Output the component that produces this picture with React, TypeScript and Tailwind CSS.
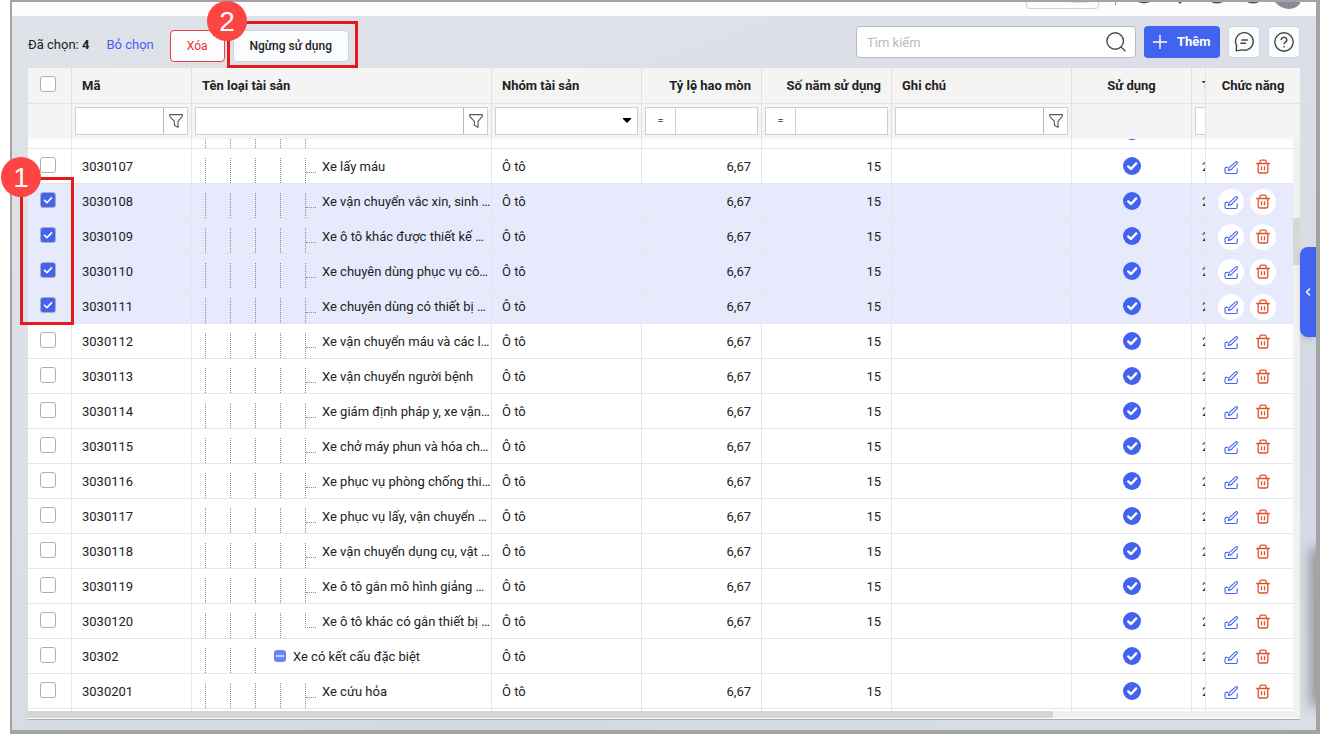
import { ChevronLeft } from "lucide-react"

type Row = { code: string; name: string; checked?: boolean; last?: boolean; group?: boolean }

// rows without a code are the ones scrolled out at the top and bottom edge
const rows: Row[] = [
  { code: "", name: "" },
  { code: "3030107", name: "Xe lấy máu" },
  { code: "3030108", name: "Xe vận chuyển vắc xin, sinh …", checked: true },
  { code: "3030109", name: "Xe ô tô khác được thiết kế …", checked: true },
  { code: "3030110", name: "Xe chuyên dùng phục vụ cô…", checked: true },
  { code: "3030111", name: "Xe chuyên dùng có thiết bị …", checked: true },
  { code: "3030112", name: "Xe vận chuyển máu và các l…" },
  { code: "3030113", name: "Xe vận chuyển người bệnh" },
  { code: "3030114", name: "Xe giám định pháp y, xe vận…" },
  { code: "3030115", name: "Xe chở máy phun và hóa ch…" },
  { code: "3030116", name: "Xe phục vụ phòng chống thi…" },
  { code: "3030117", name: "Xe phục vụ lấy, vận chuyển …" },
  { code: "3030118", name: "Xe vận chuyển dụng cụ, vật …" },
  { code: "3030119", name: "Xe ô tô gắn mô hình giảng …" },
  { code: "3030120", name: "Xe ô tô khác có gắn thiết bị …", last: true },
  { code: "30302", name: "Xe có kết cấu đặc biệt", group: true },
  { code: "3030201", name: "Xe cứu hỏa" },
  { code: "", name: "" },
]

function Checkbox({ label, checked }: { label: string; checked?: boolean }) {
  return (
    <span className="relative mb-[2px] ml-3 block h-4 w-4">
      <input
        type="checkbox"
        aria-label={label}
        defaultChecked={checked}
        className="peer block h-4 w-4 appearance-none rounded-[3px] border border-[#afafaf] bg-white checked:bg-[#4262f0]"
      />
      <svg
        viewBox="0 0 16 16"
        className="pointer-events-none absolute inset-0 hidden h-4 w-4 peer-checked:block"
        fill="none"
        stroke="white"
        strokeWidth="1.6"
      >
        <path d="M4 7.8 7 10.6 12 5.4" />
      </svg>
    </span>
  )
}

function FunnelIcon() {
  return (
    <svg viewBox="0 0 16 16" className="h-4 w-4" fill="none" stroke="#555" strokeWidth="1.1" strokeLinejoin="round">
      <path d="M1.7 1.6h12.6v1.8L10 8.4v6L6.4 12.2V8.4L1.7 3.4z" />
    </svg>
  )
}

function TextFilter({ label }: { label: string }) {
  return (
    <div className="mx-[3px] mt-[3px] flex h-7 border border-[#d0d0d0] bg-white">
      <input aria-label={label} className="w-0 min-w-0 flex-1 px-2 outline-none" />
      <button aria-label={`Lọc ${label}`} className="flex w-6 items-center justify-center border-l border-[#b8b8b8]">
        <FunnelIcon />
      </button>
    </div>
  )
}

function NumberFilter({ label }: { label: string }) {
  return (
    <div className="mx-[3px] mt-[3px] flex h-7 border border-[#d0d0d0] bg-white">
      <button aria-label={`Phép so sánh ${label}`} className="w-[30px] border-r border-[#d0d0d0] text-[11px] text-[#555]">
        =
      </button>
      <input aria-label={label} className="w-0 min-w-0 flex-1 px-2 outline-none" />
    </div>
  )
}

function CheckIcon() {
  return (
    <svg viewBox="0 0 18 18" className="mx-auto block h-[18px] w-[18px]" role="img" aria-label="Đang sử dụng">
      <circle cx="9" cy="9" r="9" fill="#4262f0" />
      <path d="M5.2 9.4 8 12l5.2-5.6" fill="none" stroke="white" strokeWidth="2.4" strokeLinecap="round" strokeLinejoin="round" />
    </svg>
  )
}

function EditIcon() {
  return (
    <svg viewBox="0 0 16 16" className="h-4 w-4" fill="none" stroke="#4262f0" strokeWidth="1.1" strokeLinejoin="round" strokeLinecap="round">
      <path d="M12.7 2.8a1.1 1.1 0 0 1 1.6 1.5L8.2 10.6l-2.9.9.9-2.8z" />
      <path d="M4.6 8.4H3.4c-.9 0-1.4.5-1.4 1.3v3.4c0 .8.5 1.4 1.4 1.4h9.4c.9 0 1.4-.6 1.4-1.4V9.8" />
    </svg>
  )
}

function TrashIcon() {
  return (
    <svg viewBox="0 0 16 16" className="h-4 w-4" fill="none" stroke="#e0522b" strokeWidth="1.3" strokeLinejoin="round">
      <path d="M1.2 4.5h13.6M4.8 4.5V3c0-1.2.6-1.8 1.6-1.8h3.2c1 0 1.6.6 1.6 1.8v1.5" />
      <path d="M3.2 4.5v7.6c0 1.2.6 1.9 1.8 1.9h6c1.2 0 1.8-.7 1.8-1.9V4.5M6.5 7.2v4M9.5 7.2v4" />
    </svg>
  )
}

function TreeCell({ row }: { row: Row }) {
  const guide = "h-[25px] w-[25px] shrink-0 self-end border-l border-dotted border-[#8c8c8c]"
  if (row.group) {
    return (
      <div className="ml-[13px] flex h-[34px] items-center">
        <span className={guide} />
        <span className={guide} />
        <span className="h-[25px] w-[19px] shrink-0 self-end border-l border-dotted border-[#8c8c8c]" />
        <button aria-label="Thu gọn" className="mr-[7px] flex h-3 w-3 items-center justify-center rounded-[3px] bg-[#6b84fa]">
          <span className="h-[2px] w-2 bg-[#cdd5fd]" />
        </button>
        <span className="whitespace-nowrap pt-[2px]">{row.name}</span>
      </div>
    )
  }
  return (
    <div className="ml-[13px] flex h-[34px] items-center">
      <span className={guide} />
      <span className={guide} />
      <span className={guide} />
      <span className={guide} />
      <span className={`flex h-[25px] w-[11px] shrink-0 self-end ${row.last ? "" : "border-l border-dotted border-[#8c8c8c]"}`}>
        {row.code && <span className={`h-[15px] w-full border-b border-dotted border-[#8c8c8c] ${row.last ? "border-l" : ""}`} />}
      </span>
      <span className="ml-[6px] whitespace-nowrap pt-[2px]">{row.name}</span>
    </div>
  )
}

function TableRow({ row }: { row: Row }) {
  const action = `flex h-[26px] w-[26px] items-center justify-center rounded-full ${row.checked ? "bg-white" : ""}`
  const filled = row.code !== "" && !row.group
  return (
    <tr className={`h-[35px] ${row.checked ? "bg-[#e7eafd]" : "bg-white"} [&>td]:border-b [&>td]:border-r [&>td]:border-[#e6e6e6] [&>td]:p-0`}>
      <td>
        <Checkbox label={`Chọn ${row.code}`} checked={row.checked} />
      </td>
      <td>
        <div className="pl-[10px] pt-[2px]">{row.code}</div>
      </td>
      <td>
        <TreeCell row={row} />
      </td>
      <td>
        <div className="pl-[10px] pt-[2px]">{row.code && "Ô tô"}</div>
      </td>
      <td>
        <div className="pr-[10px] pt-[2px] text-right">{filled && "6,67"}</div>
      </td>
      <td>
        <div className="pr-[10px] pt-[2px] text-right">{filled && "15"}</div>
      </td>
      <td />
      <td>
        <CheckIcon />
      </td>
      <td>
        <div className="overflow-hidden pl-[10px] pt-[2px]">{row.code && "2"}</div>
      </td>
      <td className="border-r-0!">
        {row.code && (
          <div className="flex items-center gap-[6px] pl-3 pt-[2px]">
            <button aria-label={`Sửa ${row.code}`} className={action}>
              <EditIcon />
            </button>
            <button aria-label={`Xóa ${row.code}`} className={action}>
              <TrashIcon />
            </button>
          </div>
        )}
      </td>
    </tr>
  )
}

function TopBar() {
  return (
    <header className="flex h-[14px] shrink-0 items-start justify-end overflow-hidden bg-[#fdfdfe] pr-4">
      <div className="flex h-[7px] w-[73px] justify-center rounded-b border border-t-0 border-[#cfd3dd] pl-8">
        <span className="h-px w-4 bg-[#ddd]" />
      </div>
      <span className="ml-4 h-[3px] w-px bg-[#999]" />
      <svg viewBox="0 0 184 8" className="h-2 w-[184px]">
        <path d="M22 0h12l-3 1h-2l-1 1-1-1h-2zM62 0h4l-2 2zM95 0h12q-6 3-12 0zM131 0h12q-6 3-12 0z" fill="#555" />
        <path d="M159 0h26q-4 7-12 7t-14-7z" fill="#868b96" />
      </svg>
    </header>
  )
}

function Toolbar() {
  return (
    <div className="flex h-[52px] shrink-0 items-center px-4">
      <div className="flex items-center pt-2">
        <span className="pb-[2px]">
          Đã chọn: <b className="font-bold">4</b>
        </span>
        <button className="ml-[17px] pb-[2px] text-[#4262f0]">Bỏ chọn</button>
        <button className="ml-4 h-8 w-[55px] rounded border border-[#e8413f] bg-[#fafcfe] text-xs text-[#e8302e]">Xóa</button>
        <button className="ml-2 h-8 w-[116px] rounded border border-[#cfd3dc] bg-[#fafcfe] text-xs font-medium">
          Ngừng sử dụng
        </button>
      </div>
      <div className="ml-auto flex h-8 w-[280px] items-center rounded border border-[#b9bcc3] bg-white pr-[9px]">
        <input
          aria-label="Tìm kiếm"
          placeholder="Tìm kiếm"
          className="min-w-0 flex-1 px-[10px] pt-[2px] outline-none placeholder:text-[#b9b9b9]"
        />
        <svg viewBox="0 0 20 20" className="h-5 w-5" fill="none" stroke="#4a4a4a" strokeWidth="1.4">
          <circle cx="9.2" cy="9" r="8.3" />
          <path d="m15 15 4.4 4.2" />
        </svg>
      </div>
      <button className="ml-2 flex h-8 w-[76px] items-center rounded bg-[#4262f0] pl-[9px] font-bold text-white">
        <svg viewBox="0 0 14 14" className="mr-[10px] h-[14px] w-[14px]" stroke="white" strokeWidth="1.4">
          <path d="M7 0v14M0 7h14" />
        </svg>
        Thêm
      </button>
      <button aria-label="Phản hồi" className="ml-2 flex h-8 w-8 items-center justify-center rounded border border-[#cfd3dc] bg-[#fafcfe]">
        <svg viewBox="0 0 20 20" className="h-5 w-5" fill="none" stroke="#444" strokeWidth="1.4" strokeLinejoin="round">
          <path d="M2.2 18.9 2.6 13.6A8.8 8.8 0 1 1 7.8 17.9zM7.4 8h6.4M6.4 11.2h5.6" />
        </svg>
      </button>
      <button aria-label="Trợ giúp" className="ml-2 flex h-8 w-8 items-center justify-center rounded border border-[#cfd3dc] bg-[#fafcfe]">
        <svg viewBox="0 0 20 20" className="h-5 w-5" fill="none" stroke="#444" strokeWidth="1.4">
          <circle cx="10" cy="10" r="9.2" />
          <path d="M7.2 8a2.8 2.6 0 1 1 4.2 2.2c-1 .6-1.4 1-1.4 2M10 14v1.6" />
        </svg>
      </button>
    </div>
  )
}

function Columns() {
  return (
    <>
      <col className="w-[44px]" />
      <col className="w-[120px]" />
      <col className="w-[300px]" />
      <col className="w-[150px]" />
      <col className="w-[120px]" />
      <col className="w-[130px]" />
      <col />
      <col className="w-[120px]" />
      <col className="w-[14px]" />
    </>
  )
}

function HeaderTable() {
  return (
    <table className="w-full table-fixed border-separate border-spacing-0 bg-[#f4f4f4]">
      <colgroup>
        <Columns />
        <col className="w-[94px]" />
      </colgroup>
      <thead className="[&_th]:border-r [&_th]:border-[#e2e2e2] [&_th]:px-[10px] [&_th]:py-0 [&_td]:border-r [&_td]:border-[#e2e2e2] [&_td]:p-0">
        <tr className="h-9 text-left [&>th]:border-b [&>th]:font-bold">
          <th className="px-0! pb-[2px]!">
            <Checkbox label="Chọn tất cả" />
          </th>
          <th>Mã</th>
          <th>Tên loại tài sản</th>
          <th>Nhóm tài sản</th>
          <th className="text-right">Tỷ lệ hao mòn</th>
          <th className="text-right">Số năm sử dụng</th>
          <th>Ghi chú</th>
          <th className="text-center">Sử dụng</th>
          <th className="px-0!">
            <div className="overflow-hidden pl-[10px]">T</div>
          </th>
          <th className="border-r-0! px-0! text-center">Chức năng</th>
        </tr>
        <tr className="h-[35px] align-top">
          <td />
          <td>
            <TextFilter label="Mã" />
          </td>
          <td>
            <TextFilter label="Tên loại tài sản" />
          </td>
          <td>
            <div className="relative mx-[3px] mt-[3px]">
              <select aria-label="Nhóm tài sản" className="block h-7 w-full appearance-none border border-[#d0d0d0] bg-white px-2">
                <option />
                <option>Ô tô</option>
              </select>
              <svg viewBox="0 0 8 5" className="pointer-events-none absolute right-[7px] top-[11px] h-[5px] w-2">
                <path d="M0 0h8v1L4 5 0 1z" />
              </svg>
            </div>
          </td>
          <td>
            <NumberFilter label="Tỷ lệ hao mòn" />
          </td>
          <td>
            <NumberFilter label="Số năm sử dụng" />
          </td>
          <td>
            <TextFilter label="Ghi chú" />
          </td>
          <td />
          <td>
            <div className="ml-[3px] mt-[3px] h-7 border border-r-0 border-[#d0d0d0] bg-white" />
          </td>
          <td className="border-r-0!" />
        </tr>
      </thead>
    </table>
  )
}

export default function App() {
  return (
    <div className="relative h-screen overflow-hidden bg-white pl-[10px] font-[Roboto,sans-serif] text-[13px] leading-4 text-[#222]">
      <div className="relative flex h-full flex-col overflow-hidden border-2 border-b-4 border-r-4 border-[#a3a3a3] bg-[linear-gradient(160deg,#dfe2e8_0%,#dcdfe8_40%,#d2d9e2_75%,#dadee7_100%)]">
        <TopBar />
        <Toolbar />
        <main className="mx-4 mb-[10px] flex min-h-0 flex-1 flex-col border-b border-[#a9adb3] bg-white">
          <HeaderTable />
          <div className="flex min-h-0 flex-1 overflow-hidden">
            <div className="min-w-0 flex-1 overflow-hidden">
              <table className="-mt-[25px] w-full table-fixed border-separate border-spacing-0">
                <colgroup>
                  <Columns />
                  <col className="w-[87px]" />
                </colgroup>
                <tbody>
                  {rows.map((row, i) => (
                    <TableRow key={i} row={row} />
                  ))}
                </tbody>
              </table>
            </div>
            <div className="w-[7px] bg-[#f1f1f1] pt-[79px]">
              <div className="h-[47px] bg-[#d6d6d6]" />
            </div>
          </div>
          <div className="mb-px h-[7px] shrink-0 bg-[#f1f1f1] pr-[247px]">
            <div className="h-full bg-[#d6d6d6]" />
          </div>
        </main>

        {/* side panel toggle */}
        <button
          aria-label="Mở bảng bên"
          className="absolute right-0 top-[245px] flex h-[90px] w-4 items-center justify-center rounded-l-lg bg-[#4262f0] text-white shadow-md"
        >
          <ChevronLeft size={12} strokeWidth={3} />
        </button>
        <div className="absolute -right-2 top-[550px] h-[150px] w-2 shadow-[0_0_14px_4px_rgba(0,0,0,0.4)]" />
      </div>

      {/* callouts */}
      <div className="pointer-events-none absolute left-5 top-[177px] h-[148px] w-[54px] border-3 border-[#e31b1b]" />
      <div className="pointer-events-none absolute left-[227px] top-[21px] h-[47px] w-[131px] border-3 border-[#e31b1b]" />
      <div className="absolute left-px top-[157px] flex h-10 w-10 items-center justify-center rounded-full bg-[#ff4444] pt-[2px] font-['Liberation_Sans',sans-serif] text-[28px] text-white">
        1
      </div>
      <div className="absolute left-[207px] top-px flex h-10 w-10 items-center justify-center rounded-full bg-[#ff4444] pt-[2px] font-['Liberation_Sans',sans-serif] text-[28px] text-white">
        2
      </div>
    </div>
  )
}
